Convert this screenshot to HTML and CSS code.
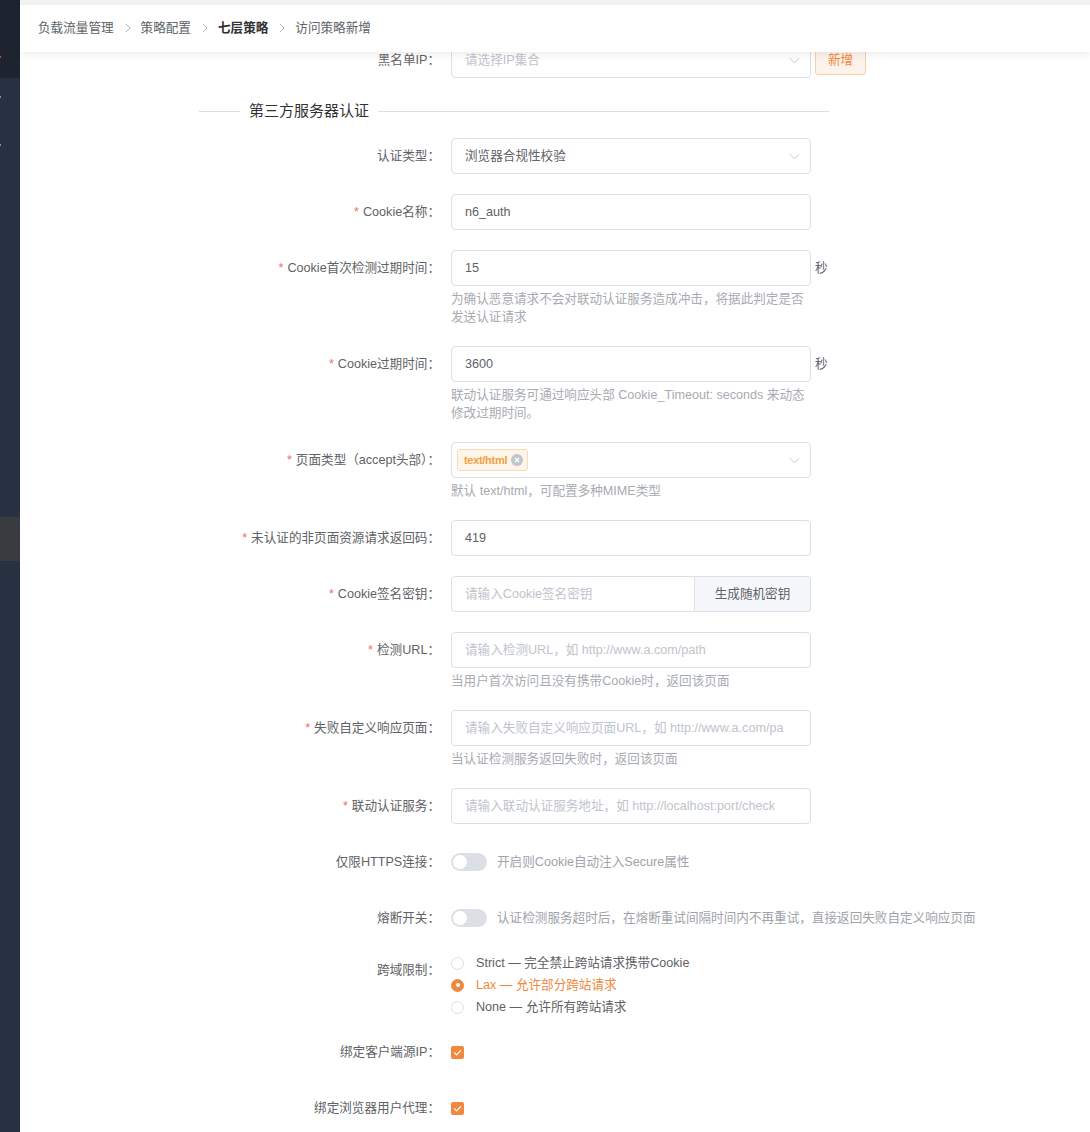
FILE: index.html
```html
<!DOCTYPE html>
<html lang="zh-CN">
<head>
    <meta charset="UTF-8">
    <title>访问策略新增</title>
    <link rel="stylesheet" href="styles.css">
</head>
<body>
<div class="layout">
    <aside class="sidebar">
        <div class="sidebar-top"><i class="dot dot-red"></i></div>
        <div class="sidebar-menu">
            <i class="dot dot-a"></i>
            <i class="dot dot-b"></i>
            <div class="sidebar-active"></div>
        </div>
    </aside>

    <main class="main">
        <header class="topbar">
            <nav class="breadcrumb">
                <span>负载流量管理</span>
                <svg class="sep" viewBox="0 0 6 10"><polyline points="1,1 5,5 1,9"/></svg>
                <span>策略配置</span>
                <svg class="sep" viewBox="0 0 6 10"><polyline points="1,1 5,5 1,9"/></svg>
                <span class="current">七层策略</span>
                <svg class="sep" viewBox="0 0 6 10"><polyline points="1,1 5,5 1,9"/></svg>
                <span>访问策略新增</span>
            </nav>
        </header>

        <div class="content">
            <form class="policy-form">
                <div class="form-item">
                    <label class="form-label">黑名单IP：</label>
                    <div class="form-control row">
                        <div class="field select">
                            <span class="placeholder">请选择IP集合</span>
                            <svg class="arrow" viewBox="0 0 12 7"><polyline points="1,1 6,6 11,1"/></svg>
                        </div>
                        <button type="button" class="btn-add">新增</button>
                    </div>
                </div>

                <div class="divider"><span>第三方服务器认证</span></div>

                <div class="form-item">
                    <label class="form-label">认证类型：</label>
                    <div class="form-control">
                        <div class="field select">
                            <span>浏览器合规性校验</span>
                            <svg class="arrow" viewBox="0 0 12 7"><polyline points="1,1 6,6 11,1"/></svg>
                        </div>
                    </div>
                </div>

                <div class="form-item">
                    <label class="form-label"><em>*</em>Cookie名称：</label>
                    <div class="form-control">
                        <div class="field"><span>n6_auth</span></div>
                    </div>
                </div>

                <div class="form-item">
                    <label class="form-label"><em>*</em>Cookie首次检测过期时间：</label>
                    <div class="form-control">
                        <div class="row">
                            <div class="field"><span>15</span></div>
                            <span class="unit">秒</span>
                        </div>
                        <p class="help">为确认恶意请求不会对联动认证服务造成冲击，将据此判定是否发送认证请求</p>
                    </div>
                </div>

                <div class="form-item">
                    <label class="form-label"><em>*</em>Cookie过期时间：</label>
                    <div class="form-control">
                        <div class="row">
                            <div class="field"><span>3600</span></div>
                            <span class="unit">秒</span>
                        </div>
                        <p class="help">联动认证服务可通过响应头部 Cookie_Timeout: seconds 来动态修改过期时间。</p>
                    </div>
                </div>

                <div class="form-item">
                    <label class="form-label"><em>*</em>页面类型（accept头部）：</label>
                    <div class="form-control">
                        <div class="field select tags">
                            <span class="tag">text/html
                                <svg class="tag-close" viewBox="0 0 12 12"><circle cx="6" cy="6" r="6"/><path d="M4 4 L8 8 M8 4 L4 8"/></svg>
                            </span>
                            <svg class="arrow" viewBox="0 0 12 7"><polyline points="1,1 6,6 11,1"/></svg>
                        </div>
                        <p class="help">默认 text/html，可配置多种MIME类型</p>
                    </div>
                </div>

                <div class="form-item">
                    <label class="form-label"><em>*</em>未认证的非页面资源请求返回码：</label>
                    <div class="form-control">
                        <div class="field"><span>419</span></div>
                    </div>
                </div>

                <div class="form-item">
                    <label class="form-label"><em>*</em>Cookie签名密钥：</label>
                    <div class="form-control">
                        <div class="input-group">
                            <div class="field"><span class="placeholder">请输入Cookie签名密钥</span></div>
                            <button type="button" class="append">生成随机密钥</button>
                        </div>
                    </div>
                </div>

                <div class="form-item">
                    <label class="form-label"><em>*</em>检测URL：</label>
                    <div class="form-control">
                        <div class="field"><span class="placeholder">请输入检测URL，如 http://www.a.com/path</span></div>
                        <p class="help">当用户首次访问且没有携带Cookie时，返回该页面</p>
                    </div>
                </div>

                <div class="form-item">
                    <label class="form-label"><em>*</em>失败自定义响应页面：</label>
                    <div class="form-control">
                        <div class="field"><span class="placeholder">请输入失败自定义响应页面URL，如 http://www.a.com/pa</span></div>
                        <p class="help">当认证检测服务返回失败时，返回该页面</p>
                    </div>
                </div>

                <div class="form-item">
                    <label class="form-label"><em>*</em>联动认证服务：</label>
                    <div class="form-control">
                        <div class="field"><span class="placeholder">请输入联动认证服务地址，如 http://localhost:port/check</span></div>
                    </div>
                </div>

                <div class="form-item">
                    <label class="form-label">仅限HTTPS连接：</label>
                    <div class="form-control row">
                        <span class="switch"></span>
                        <span class="switch-text">开启则Cookie自动注入Secure属性</span>
                    </div>
                </div>

                <div class="form-item">
                    <label class="form-label">熔断开关：</label>
                    <div class="form-control row">
                        <span class="switch"></span>
                        <span class="switch-text">认证检测服务超时后，在熔断重试间隔时间内不再重试，直接返回失败自定义响应页面</span>
                    </div>
                </div>

                <div class="form-item form-item-radio">
                    <label class="form-label">跨域限制：</label>
                    <div class="form-control radio-group">
                        <label class="radio"><span class="radio-dot"></span>Strict — 完全禁止跨站请求携带Cookie</label>
                        <label class="radio checked"><span class="radio-dot"></span>Lax — 允许部分跨站请求</label>
                        <label class="radio"><span class="radio-dot"></span>None — 允许所有跨站请求</label>
                    </div>
                </div>

                <div class="form-item">
                    <label class="form-label">绑定客户端源IP：</label>
                    <div class="form-control row">
                        <span class="checkbox"><svg viewBox="0 0 12 12"><polyline points="3,6 5.2,8.2 9,4"/></svg></span>
                    </div>
                </div>

                <div class="form-item">
                    <label class="form-label">绑定浏览器用户代理：</label>
                    <div class="form-control row">
                        <span class="checkbox"><svg viewBox="0 0 12 12"><polyline points="3,6 5.2,8.2 9,4"/></svg></span>
                    </div>
                </div>
            </form>
        </div>
    </main>
</div>
</body>
</html>
```

FILE: styles.css
```css
*{
    margin: 0;
    padding: 0;
    box-sizing: border-box;
}
body{
    font: 12.6px/1.5 "Liberation Sans", "Noto Sans CJK SC", sans-serif;
    color: #606266;
    background: #fff;
}
button{
    font: inherit;
    cursor: pointer;
}

.layout{
    display: flex;
    min-height: 100vh;
    overflow: hidden;
}

/* sidebar (collapsed, only a strip visible) */
.sidebar{
    width: 20px;
    flex-shrink: 0;
    display: flex;
    flex-direction: column;
    background: #283142;
}
.sidebar-top{
    height: 78px;
    background: #1e2330;
    padding-top: 56px;
}
.sidebar-menu{
    flex: 1;
    padding-top: 18px;
}
.dot{
    display: block;
    width: 1px;
    height: 2px;
    background: #8a8f99;
}
.dot-red{
    background: #d9453b;
}
.dot-b{
    margin-top: 46px;
}
.sidebar-active{
    margin-top: 371px;
    height: 44px;
    background: #3a3b40;
}

/* main */
.main{
    flex: 1;
    position: relative;
    background: #fff;
}
.topbar{
    position: absolute;
    top: 0;
    left: 0;
    right: 0;
    height: 52px;
    border-top: 5px solid #f2f2f2;
    background: #fff;
    box-shadow: 0 3px 8px rgba(0,0,0,0.07);
    z-index: 10;
    display: flex;
    align-items: center;
    padding-left: 18px;
}
.breadcrumb{
    display: flex;
    align-items: center;
    color: #606266;
}
.breadcrumb .current{
    color: #303133;
    font-weight: 700;
}
.breadcrumb .sep{
    width: 6px;
    height: 10px;
    margin: 0 10px 0 11px;
    fill: none;
    stroke: #b4b7bd;
    stroke-width: 1;
}

.content{
    padding: 42px 0 40px 179px;
}

/* form */
.form-item{
    display: flex;
    margin-bottom: 20px;
}
.form-label{
    width: 252px;
    flex-shrink: 0;
    padding-right: 11px;
    text-align: right;
    line-height: 36px;
    color: #606266;
}
.form-label em{
    font-style: normal;
    color: #f56c6c;
    margin-right: 4px;
}
.form-control{
    display: flex;
    flex-direction: column;
}
.row{
    display: flex;
    flex-direction: row;
    align-items: center;
}
.form-control.row{
    min-height: 36px;
}

.field{
    width: 360px;
    height: 36px;
    border: 1px solid #dcdfe6;
    border-radius: 4px;
    padding: 0 13px;
    display: flex;
    align-items: center;
    justify-content: space-between;
    color: #606266;
    background: #fff;
}
.placeholder{
    color: #c0c4cc;
}
.arrow{
    width: 11px;
    height: 7px;
    fill: none;
    stroke: #c0c4cc;
    stroke-width: 1;
    margin-right: -3px;
}
.unit{
    margin-left: 4px;
    color: #606266;
}
.help{
    width: 360px;
    padding-top: 4px;
    line-height: 18px;
    color: #a8abb2;
}

.btn-add{
    margin-left: 4px;
    width: 51px;
    height: 30px;
    border: 1px solid #f9cfa8;
    border-radius: 3px;
    background: #fef3ea;
    color: #f0883e;
}

.divider{
    width: 630px;
    height: 26px;
    margin-bottom: 14px;
    display: flex;
    align-items: center;
    color: #303133;
    font-size: 15px;
}
.divider::before,
.divider::after{
    content: "";
    height: 1px;
    background: #dcdfe6;
}
.divider::before{
    width: 41px;
}
.divider::after{
    flex: 1;
}
.divider span{
    padding: 0 9px;
}

.tags{
    padding-left: 5px;
}
.tag{
    display: inline-flex;
    align-items: center;
    height: 22px;
    padding: 0 4px 0 6px;
    border: 1px solid #f7dcb8;
    border-radius: 3px;
    background: #fdf5ea;
    color: #f0a040;
    font-size: 11px;
    font-weight: 700;
    letter-spacing: -0.3px;
}
.tag-close{
    width: 12px;
    height: 12px;
    margin-left: 4px;
}
.tag-close circle{
    fill: #c0c4cc;
}
.tag-close path{
    stroke: #fff;
    stroke-width: 1.3;
}

.input-group{
    display: flex;
    width: 360px;
}
.input-group .field{
    flex: 1;
    width: auto;
    border-radius: 4px 0 0 4px;
}
.input-group .append{
    width: 116px;
    height: 36px;
    border: 1px solid #dcdfe6;
    border-left: 0;
    border-radius: 0 4px 4px 0;
    background: #f5f7fa;
    color: #606266;
}

.switch{
    position: relative;
    width: 36px;
    height: 18px;
    border-radius: 9px;
    background: #dcdfe6;
    flex-shrink: 0;
}
.switch::after{
    content: "";
    position: absolute;
    top: 2px;
    left: 2px;
    width: 14px;
    height: 14px;
    border-radius: 50%;
    background: #fff;
}
.switch-text{
    margin-left: 10px;
    color: #a0a3a9;
}

.form-item-radio{
    margin-top: -4px;
    margin-bottom: 16px;
}
.radio{
    display: flex;
    align-items: center;
    line-height: 22px;
    color: #606266;
}
.radio-dot{
    width: 13px;
    height: 13px;
    border: 1px solid #dcdfe6;
    border-radius: 50%;
    background: #fff;
    margin-right: 12px;
    position: relative;
}
.radio.checked{
    color: #f0883e;
}
.radio.checked .radio-dot{
    border-color: #f0883e;
    background: #f0883e;
}
.radio.checked .radio-dot::after{
    content: "";
    position: absolute;
    top: 50%;
    left: 50%;
    width: 4px;
    height: 4px;
    margin: -2px 0 0 -2px;
    border-radius: 50%;
    background: #fff;
}

.checkbox{
    width: 13px;
    height: 13px;
    border-radius: 2px;
    background: #f0883e;
    display: flex;
}
.checkbox svg{
    width: 13px;
    height: 13px;
    fill: none;
    stroke: #fff;
    stroke-width: 1.2;
}
```
